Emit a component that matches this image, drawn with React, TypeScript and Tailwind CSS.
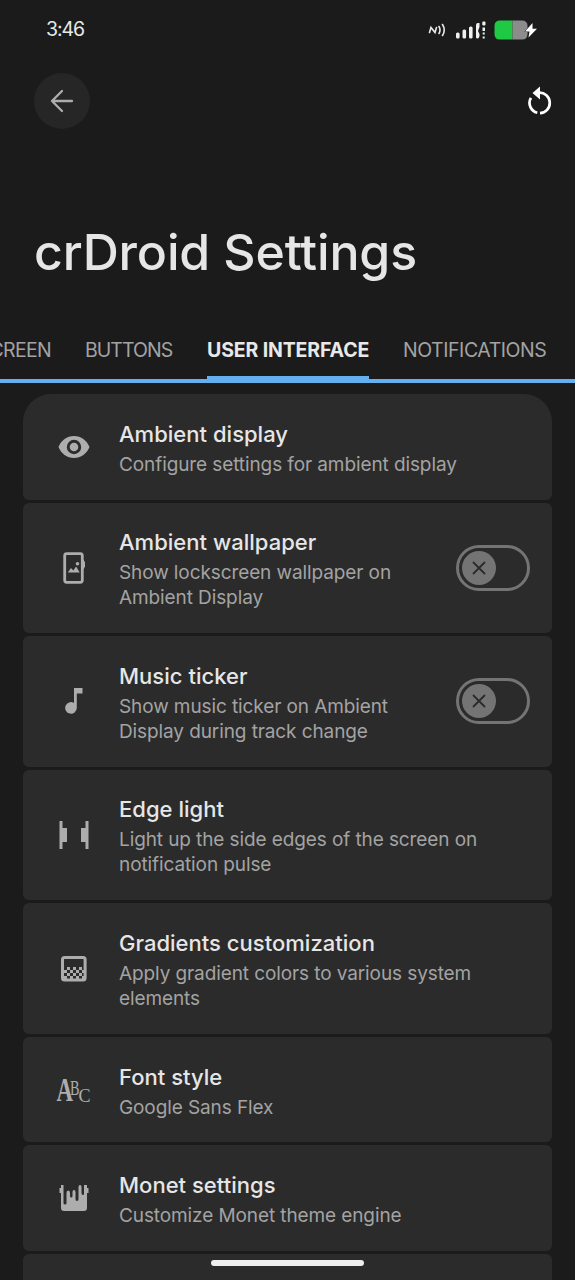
import React from 'react';

const EyeIcon = () => <svg width="32" height="24" viewBox="0 0 32 24" fill="#adadad">
    <path fillRule="evenodd" d="M16 1C9 1 3 5.500 0.500 12C3 18.500 9 23 16 23C23 23 29 18.500 31.500 12C29 5.500 23 1 16 1ZM16 19.200A7.200 7.200 0 1 1 16 4.800A7.200 7.200 0 1 1 16 19.200ZM16 16.300A4.300 4.300 0 1 0 16 7.700A4.300 4.300 0 1 0 16 16.300Z" />
  </svg>;

const WallpaperIcon = () => <svg width="24" height="34" viewBox="0 0 24 34" fill="#adadad">
    <rect x="2.700" y="2.700" width="17.600" height="28.600" rx="2" fill="none" stroke="#adadad" strokeWidth="2.800" />
    <path d="M21 9h1v1.500h1v6h-1v1.500h-1z" />
    <circle cx="15.500" cy="12.800" r="1.800" />
    <path d="M5.800 21.500l3.200-4.500 2.300 2.500 2.800-4 3.600 6z" />
  </svg>;

const NoteIcon = () => <svg width="20" height="28" viewBox="0 0 20 28" fill="#adadad">
    <path d="M10 1H18.500V6.500H12.800V21A5.800 5.800 0 1 1 10 15.900Z" />
  </svg>;

const EdgeIcon = () => <svg width="30" height="30" viewBox="0 0 30 30" fill="#adadad">
    <path d="M0.500 1H3.500V8H8V22H3.500V29H0.500Z" />
    <path d="M29.500 1H26.500V8H22V22H26.500V29H29.500Z" />
  </svg>;

const GradientIcon = () => <svg width="28" height="28" viewBox="0 0 28 28" fill="#adadad">
    <rect x="2.500" y="2.500" width="22.600" height="22.600" rx="2" fill="none" stroke="#adadad" strokeWidth="3" />
    <path d="M7 12h3v3h-3zM13 12h3v3h-3zM19 12h3v3h-3zM4 15h3v3h-3zM10 15h3v3h-3zM16 15h3v3h-3zM22 15h2v3h-2zM7 18h3v3h-3zM13 18h3v3h-3zM19 18h3v3h-3zM4 21h3v3h-3zM10 21h3v3h-3zM16 21h3v3h-3zM22 21h2v3h-2z" />
  </svg>;

const FontIcon = () => <svg className="overflow-visible" width="36" height="28" viewBox="0 0 36 28" fill="#adadad" fontFamily="Liberation Serif, serif">
    <text x="0.500" y="24.500" fontSize="33" fontWeight="700" textLength="16.500" lengthAdjust="spacingAndGlyphs">A</text>
    <text x="14" y="19" fontSize="20" textLength="9.500" lengthAdjust="spacingAndGlyphs">B</text>
    <text x="22.500" y="25.500" fontSize="19" textLength="12" lengthAdjust="spacingAndGlyphs">C</text>
  </svg>;

const MonetIcon = () => <svg width="30" height="28" viewBox="0 0 30 28" fill="#adadad">
    <path d="M2 1H4.500V19Q4.500 20.500 6 20.500T7.500 19V9Q7.500 6.500 9.300 6.500T11 9V12Q11 13.500 12.300 13.500T13.500 12V8Q13.500 6 15 6T16.500 8V15Q16.500 17 18 17T19.500 15V3Q19.500 1 21 1T22.500 3V9Q22.500 11 24 11T25 9V1H28V4H29.500V9H28V24Q28 27 25 27H5Q2 27 2 24V9H0.500V4H2Z" />
  </svg>;

const Toggle = () => <div className="flex h-[46px] w-[74px] shrink-0 items-center rounded-full border-3 border-[#747474] pl-[3px]">
    <div className="flex h-[34px] w-[34px] items-center justify-center rounded-full bg-[#747474]">
      <svg width="14" height="14" viewBox="0 0 14 14" stroke="#2b2b2b" strokeWidth="1.800" strokeLinecap="round">
        <path d="M1.500 1.500L12.500 12.500M12.500 1.500L1.500 12.500" />
      </svg>
    </div>
  </div>;

const items = [
  { icon: <EyeIcon />, title: 'Ambient display', lines: ['Configure settings for ambient display'] },
  { icon: <WallpaperIcon />, title: 'Ambient wallpaper', lines: ['Show lockscreen wallpaper on', 'Ambient Display'], toggle: true },
  { icon: <NoteIcon />, title: 'Music ticker', lines: ['Show music ticker on Ambient', 'Display during track change'], toggle: true },
  { icon: <EdgeIcon />, title: 'Edge light', lines: ['Light up the side edges of the screen on', 'notification pulse'] },
  { icon: <GradientIcon />, title: 'Gradients customization', lines: ['Apply gradient colors to various system', 'elements'] },
  { icon: <FontIcon />, title: 'Font style', lines: ['Google Sans Flex'] },
  { icon: <MonetIcon />, title: 'Monet settings', lines: ['Customize Monet theme engine'] }
];

const StatusBar = () => <div className="flex h-[60px] shrink-0 items-center justify-between pl-[46px] pr-[37px]">
    <span className="text-[19.500px] tracking-[-1.1px] text-[#e8e8e8]">3:46</span>
    <div className="flex items-center">
      <svg width="18" height="14" viewBox="0 0 18 14" fill="none" stroke="#e8e8e8" strokeWidth="1.600" strokeLinecap="round">
        <path d="M1.500 9.500L3 4.500L7 9.500L8.500 4.500" />
        <path d="M11 3.500Q13 7 11 10.500M14.500 1.500Q18 7 14.500 12.500" />
      </svg>
      <svg className="ml-[10px]" width="30" height="18" viewBox="0 0 30 18" fill="#f0f0f0">
        <rect x="0" y="11.500" width="3.600" height="6" rx="1.500" />
        <rect x="6.500" y="8.500" width="3.600" height="9" rx="1.500" />
        <rect x="13" y="5.500" width="3.600" height="12" rx="1.500" />
        <path d="M20 4Q20 2 22 2H23.500V6L22 10L23.500 13V15Q23 17.500 21.500 17.500T20 16Z" />
        <rect x="26.300" y="0.500" width="3.200" height="4" rx="1" />
        <path d="M26.500 6.500h2.500v3.500h-2.500zM26.700 11.500h2v2h-2zM26.700 15.500h2v2h-2z" />
      </svg>
      <svg className="ml-[8px]" width="44" height="20" viewBox="0 0 44 20">
        <path d="M6 0.500H18.500V19.500H6Q0.500 19.500 0.500 14V6Q0.500 0.500 6 0.500Z" fill="#20c943" />
        <path d="M18.500 0.500H28Q33.500 0.500 33.500 6V14Q33.500 19.500 28 19.500H18.500Z" fill="#8c8c8c" />
        <path d="M38.500 3L31 11.500H35.500L34.500 17.500L43 8.800H38.500Z" fill="#fff" stroke="#1c1c1c" strokeWidth="1" paintOrder="stroke" />
      </svg>
    </div>
  </div>;

const App = () => {
  return <div className="relative flex h-screen w-full flex-col overflow-hidden bg-[#1b1b1b] font-[Inter,sans-serif]">
      <StatusBar />
      {/* Toolbar */}
      <div className="flex h-[82px] shrink-0 items-center justify-between pl-[34px] pr-[22px]">
        <button className="flex h-14 w-14 items-center justify-center rounded-full bg-[#262626]">
          <svg width="24" height="24" viewBox="0 0 24 24" fill="none" stroke="#adadad" strokeWidth="2.300" strokeLinecap="round" strokeLinejoin="round">
            <path d="M22 12H2M12 2L2 12L12 22" />
          </svg>
        </button>
        <svg width="26" height="30" viewBox="0 0 26 30" fill="none" stroke="#fff" strokeWidth="2.700">
          <path d="M8 6.700H12A10.200 10.200 0 1 1 13 27.200" />
          <path d="M10.300 26.800A10.200 10.200 0 0 1 3.900 11.800" />
          <path d="M13 0.500V13.500L5.500 7Z" fill="#fff" stroke="none" />
        </svg>
      </div>
      <div className="flex h-[176px] shrink-0 items-center pl-[34px] pt-[44px]">
        <h1 className="whitespace-nowrap text-[50px] font-medium leading-none tracking-[-0.15px] text-[#e6e6e6]">crDroid Settings</h1>
      </div>
      {/* Tabs */}
      <div className="flex h-[65px] shrink-0 border-b-4 border-[#64b0ee] text-[19.500px] text-[#a3a3a3]">
        <div className="flex w-[51px] items-center justify-end whitespace-nowrap pt-[5px] tracking-[-0.7px]">SCREEN</div>
        <div className="ml-[34px] flex w-[87px] items-center whitespace-nowrap pt-[5px] tracking-[-0.95px]">BUTTONS</div>
        <div className="ml-[35px] flex w-[162px] items-center whitespace-nowrap border-b-3 border-[#64b0ee] pt-[8px] font-bold tracking-[-0.13px] text-[#e8e8e8]">USER INTERFACE</div>
        <div className="ml-[34px] flex items-center whitespace-nowrap pt-[5px] tracking-[-0.45px]">NOTIFICATIONS</div>
      </div>
      {/* Preference list */}
      <div className="mx-[23px] mt-[11px] flex flex-col gap-[3px]">
        {items.map(item => <div key={item.title} className={`flex shrink-0 items-center rounded-md bg-[#2b2b2b] pr-[22px] first:rounded-t-[28px] ${item.lines.length > 1 ? 'h-[130.600px]' : 'h-[105.500px]'}`}>
            <div className="flex w-[96px] shrink-0 justify-center pl-[5px]">{item.icon}</div>
            <div className="flex-1 whitespace-nowrap">
              <div className="text-[22px] font-medium leading-[35px] tracking-[0.02px] text-[#e6e6e6]">{item.title}</div>
              {item.lines.map(line => <div key={line} className="text-[19px] leading-[25px] tracking-[-0.1px] text-[#a3a3a3]">{line}</div>)}
            </div>
            {item.toggle && <Toggle />}
          </div>)}
        <div className="h-[105px] shrink-0 rounded-md bg-[#2b2b2b]" />
      </div>
      {/* Gesture handle */}
      <div className="absolute left-[211px] top-[1260px] h-1.5 w-[153px] rounded-full bg-[#efefef]" />
    </div>;
};
export default App;
